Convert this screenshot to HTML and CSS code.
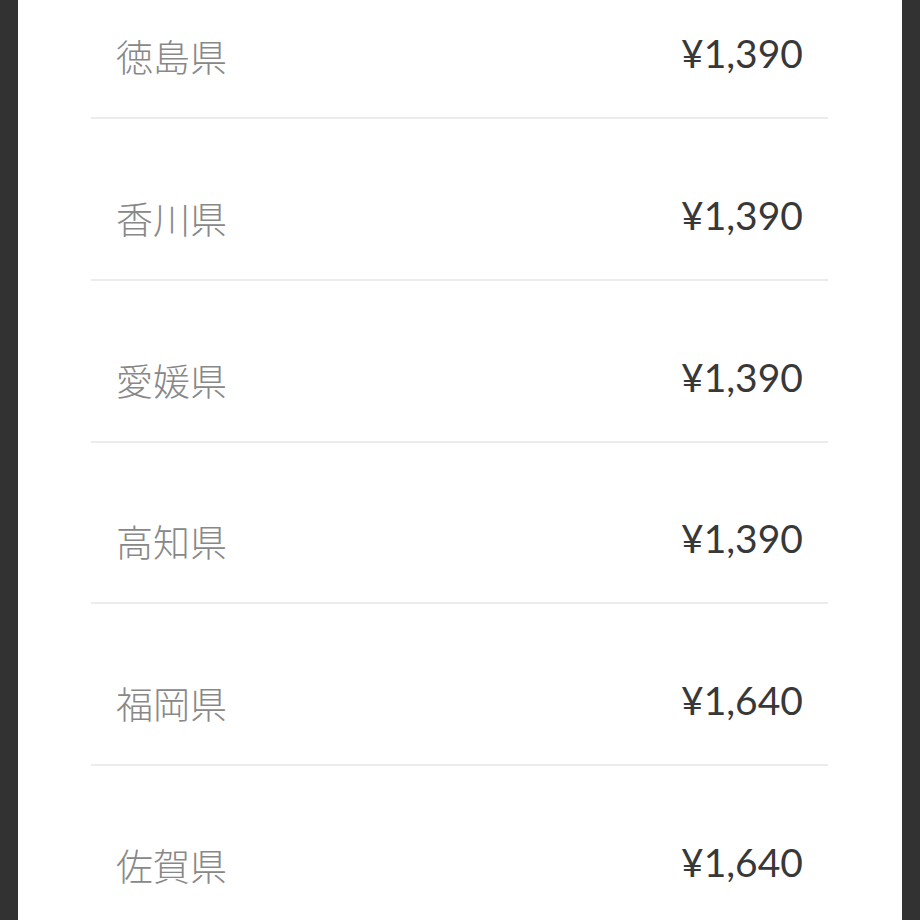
FILE: index.html
```html
<!DOCTYPE html>
<html lang="ja">
<head>
<meta charset="utf-8">
<link rel="stylesheet" href="styles.css">
</head>
<body>
<div class="panel">
  <ul class="list">
    <li class="row"><span class="name">徳島県</span><span class="price">¥1,390</span></li>
    <li class="row"><span class="name">香川県</span><span class="price">¥1,390</span></li>
    <li class="row"><span class="name">愛媛県</span><span class="price">¥1,390</span></li>
    <li class="row"><span class="name">高知県</span><span class="price">¥1,390</span></li>
    <li class="row"><span class="name">福岡県</span><span class="price">¥1,640</span></li>
    <li class="row"><span class="name">佐賀県</span><span class="price">¥1,640</span></li>
  </ul>
</div>
</body>
</html>
```
FILE: styles.css
```css
html, body {
  margin: 0;
  padding: 0;
  height: 100%;
  overflow: hidden;
  background: #323232;
}
.panel {
  margin: 0 18px;
  height: 100%;
  background: #ffffff;
  overflow: hidden;
}
.list {
  list-style: none;
  margin: -42.75px 0 0 0;
  padding: 0 74px 0 73px;
}
.row {
  box-sizing: border-box;
  height: 161.75px;
  display: flex;
  justify-content: space-between;
  align-items: flex-end;
  padding: 0 25px 37px 25px;
  border-bottom: 2px solid #ececec;
  line-height: 48px;
}
.name {
  font-family: "Noto Sans CJK JP", "Noto Sans", sans-serif;
  font-size: 37px;
  font-weight: 300;
  color: #888888;
}
.price {
  font-family: Lato, "Liberation Sans", sans-serif;
  font-size: 39px;
  color: #383838;
  position: relative;
  top: -3px;
}
```
